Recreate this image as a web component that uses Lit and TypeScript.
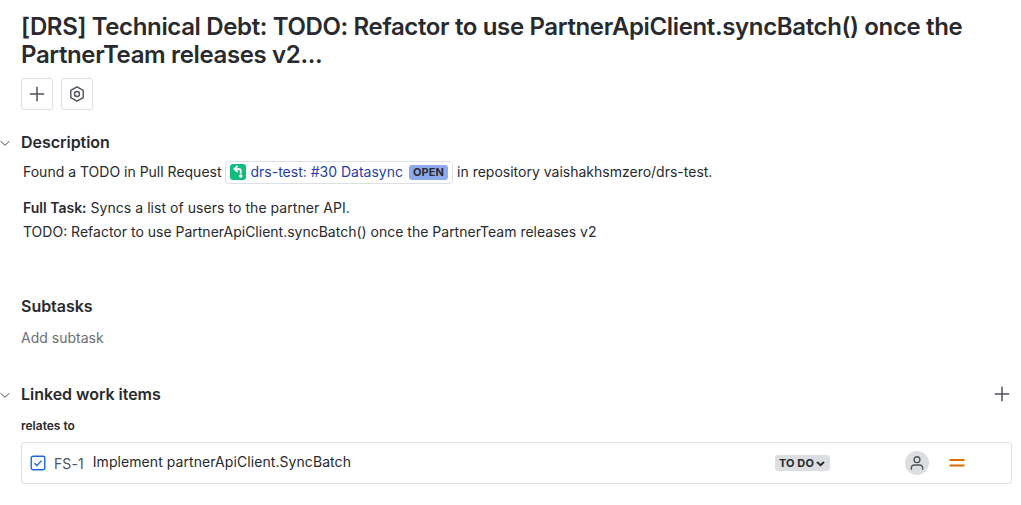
import { LitElement, html, css } from "lit";
import { customElement } from "lit/decorators.js";

const chevron = html`<svg class="chev" width="12" height="12" viewBox="0 0 12 12" fill="none"><path d="M1.5 4.2 6 8.2l4.5-4" stroke="#505258" stroke-width="1"/></svg>`;
const plus = html`<svg class="plus" width="16" height="16" viewBox="0 0 16 16" fill="none"><path d="M8 .8v14.4M.8 8h14.4" stroke="#505258" stroke-width="1.5"/></svg>`;

@customElement("app-root")
export class AppRoot extends LitElement {
  static styles = css`
    :host { display: block; width: 1021px; height: 505px; overflow: hidden; background: #fff; color: #292a2e; font-family: Inter, "Noto Sans", sans-serif; font-size: 14px; box-sizing: border-box; padding: 13px 9px 0 21px; }
    * { box-sizing: border-box; }
    h1 { margin: 0; font-size: 24px; line-height: 28px; font-weight: 600; letter-spacing: -0.36px; color: #292a2e; }
    .actions { display: flex; gap: 8px; margin-top: 9px; }
    .btn { width: 32px; height: 32px; border: 1px solid #dcdfe4; border-radius: 3px; display: flex; align-items: center; justify-content: center; }
    .section-head { position: relative; display: flex; align-items: center; justify-content: space-between; height: 20px; }
    .section-head .plus { margin-right: 2px; }
    h2 { margin: 0; font-size: 16px; line-height: 20px; font-weight: 600; letter-spacing: -0.03px; }
    .chev { position: absolute; left: -22px; top: 5px; }
    .desc-head { margin-top: 22px; }
    .desc { margin: 8px 0 0 2px; line-height: 20px; }
    .line { display: flex; align-items: center; height: 24px; white-space: pre; }
    .chip { display: inline-flex; align-items: center; height: 23px; margin: 0 4px 0 0; padding: 0 4px; border: 1px solid #dcdfe4; border-radius: 4px; }
    .pr-icon { width: 16px; height: 16px; margin-right: 4px; }
    .link { color: #1f3fa8; }
    .open { margin-left: 6px; height: 15px; padding: 0 4px; background: #8fa9ee; color: #292a2e; border-radius: 3px; font-size: 11px; line-height: 15px; font-weight: 700; letter-spacing: 0.1px; }
    .task { margin-top: 14px; }
    .task p { margin: 0; line-height: 20px; height: 20px; }
    .task p + p { margin-top: 4px; }
    .wide { letter-spacing: 0.05px; }
    b { font-weight: 600; }
    .subtasks { margin-top: 54px; }
    .add { margin-top: 12px; line-height: 20px; color: #6b6e76; }
    .linked { margin-top: 36px; }
    .relates { margin-top: 14px; font-size: 12px; line-height: 16px; font-weight: 600; }
    .item { margin-top: 8px; height: 42px; border: 1px solid #dcdfe4; border-radius: 3px; display: flex; align-items: center; padding-left: 8px; }
    .check { flex: none; width: 16px; height: 16px; }
    .key { margin-left: 8px; color: #505258; letter-spacing: 0.1px; }
    .summary { margin-left: 9px; margin-top: -4px; flex: 1; letter-spacing: 0.07px; }
    .status { display: inline-flex; align-items: center; gap: 2px; height: 16px; width: 55px; padding-left: 4px; background: #dddee1; border-radius: 3px; font-size: 11px; font-weight: 700; color: #292a2e; letter-spacing: 0.1px; }
    .avatar { margin-left: 75px; width: 24px; height: 24px; border-radius: 50%; background: #dddee1; display: flex; align-items: center; justify-content: center; }
    .priority { margin-left: 20px; margin-right: 46px; width: 16px; height: 16px; }
  `;

  render() {
    return html`
      <h1>[DRS] Technical Debt: TODO: Refactor to use PartnerApiClient.syncBatch() once the PartnerTeam releases v2...</h1>
      <div class="actions">
        <div class="btn">${plus}</div>
        <div class="btn">
          <svg width="16" height="16" viewBox="0 0 16 16" fill="none" stroke="#505258" stroke-width="1.4"><path d="M8 .8l6.2 3.6v7.2L8 15.2l-6.2-3.6V4.4z" stroke-linejoin="round"/><circle cx="8" cy="8" r="2.5"/></svg>
        </div>
      </div>

      <div class="section-head desc-head">${chevron}<h2>Description</h2></div>
      <div class="desc">
        <div class="line">Found a TODO in Pull Request <span class="chip">
          <svg class="pr-icon" viewBox="0 0 16 16"><rect width="16" height="16" rx="3" fill="#10bd7f"/><path d="M7.6 2 4.4 5l3.2 3M4.8 5h3.8c1.3 0 2.2.8 2.2 2.2V9.5" fill="none" stroke="#fff" stroke-width="1.8"/><circle cx="10.8" cy="12" r="1.7" fill="#fff"/></svg>
          <span class="link">drs-test: #30 Datasync</span><span class="open">OPEN</span></span>in repository vaishakhsmzero/drs-test.</div>
        <div class="task">
          <p><b>Full Task:</b> <span class="wide">Syncs a list of users to the partner API.</span></p>
          <p>TODO: Refactor to use PartnerApiClient.syncBatch() once the PartnerTeam releases v2</p>
        </div>
      </div>

      <div class="section-head subtasks"><h2>Subtasks</h2></div>
      <div class="add">Add subtask</div>

      <div class="section-head linked">${chevron}<h2>Linked work items</h2>${plus}</div>
      <div class="relates">relates to</div>
      <div class="item">
        <svg class="check" viewBox="0 0 16 16" fill="none"><rect x="1.2" y="1.2" width="13.6" height="13.6" rx="2" stroke="#1868db" stroke-width="1.4"/><path d="M4.5 8.2l2.4 2.4 4.6-5" stroke="#1868db" stroke-width="1.4"/></svg>
        <span class="key">FS-1</span>
        <span class="summary">Implement partnerApiClient.SyncBatch</span>
        <span class="status">TO DO<svg width="9" height="9" viewBox="0 0 9 9" fill="none"><path d="M1 3l3.5 3.2L8 3" stroke="#292a2e" stroke-width="2"/></svg></span>
        <span class="avatar"><svg width="18" height="18" viewBox="0 0 16 16" fill="none" stroke="#505258" stroke-width="1.2"><circle cx="8" cy="5" r="2.6"/><path d="M3 14v-1.5C3 10.5 4.5 9.8 6 9.8h4c1.5 0 3 .7 3 2.7V14"/></svg></span>
        <svg class="priority" viewBox="0 0 16 16" fill="none"><path d="M0.5 5h15M.5 10.5h15" stroke="#e06c00" stroke-width="2"/></svg>
      </div>
    `;
  }
}
